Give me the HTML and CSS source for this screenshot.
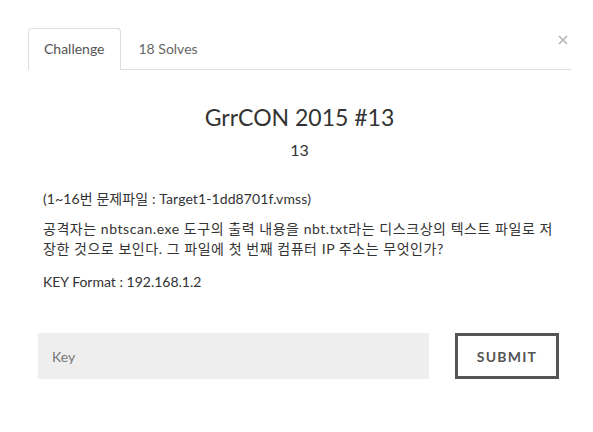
FILE: index.html
```html
<!DOCTYPE html>
<html lang="ko">
<head>
<meta charset="utf-8">
<title>GrrCON 2015 #13</title>
<link rel="stylesheet" href="styles.css">
</head>
<body>
<div class="modal">
  <button class="close" aria-label="Close">
    <svg width="10" height="10" viewBox="0 0 10 10"><path d="M1 1L9 9M9 1L1 9" stroke="#b4b4b4" stroke-width="1.6" fill="none"/></svg>
  </button>
  <ul class="tabs">
    <li class="tab active">Challenge</li>
    <li class="tab">18 Solves</li>
  </ul>
  <div class="content">
    <h3 class="title">GrrCON 2015 #13</h3>
    <div class="points">13</div>
    <div class="desc">
      <p class="file">(1~16번 문제파일 : Target1-1dd8701f.vmss)</p>
      <p class="long">공격자는 nbtscan.exe 도구의 출력 내용을 nbt.txt라는 디스크상의 텍스트 파일로 저장한 것으로 보인다. 그 파일에 첫 번째 컴퓨터 IP 주소는 무엇인가?</p>
      <p class="format">KEY Format : 192.168.1.2</p>
    </div>
  </div>
  <form class="form">
    <input class="key" type="text" placeholder="Key">
    <button class="submit" type="button">SUBMIT</button>
  </form>
</div>
</body>
</html>
```

FILE: styles.css
```css
html, body {
  margin: 0;
  padding: 0;
  background: #fff;
}
body {
  font-family: Lato, "Noto Sans CJK KR", sans-serif;
  color: #333;
  font-size: 14px;
}
.modal {
  position: relative;
  padding: 28px 22px 0 28px;
}
.close {
  position: absolute;
  top: 35px;
  left: 558px;
  width: 10px;
  height: 10px;
  padding: 0;
  border: 0;
  background: none;
  line-height: 0;
}
.tabs {
  list-style: none;
  margin: 0;
  padding: 0;
  display: flex;
  border-bottom: 1px solid #ddd;
}
.tab {
  padding: 10px 15px;
  line-height: 20px;
  border: 1px solid transparent;
  border-bottom: 0;
  border-radius: 4px 4px 0 0;
  margin-right: 2px;
  margin-bottom: -1px;
  color: #666;
  font-size: 14px;
}
.tab.active {
  border-color: #ddd;
  background: #fff;
  color: #555;
  padding-bottom: 11px;
}
.content {
  padding: 0 15px;
}
.title {
  margin: 34px 0 0;
  text-align: center;
  font-weight: 400;
  font-size: 23px;
  line-height: 26px;
  color: #333;
}
.points {
  margin-top: 9px;
  text-align: center;
  font-size: 16px;
  line-height: 22px;
  color: #333;
}
.desc {
  margin-top: 28px;
  width: 520px;
  color: #333;
}
.desc p {
  margin: 0 0 10px;
  line-height: 20px;
}
.desc .file {
  letter-spacing: 0.1px;
}
.desc .long {
  letter-spacing: 0.55px;
}
.desc .format {
  padding-top: 3px;
}
.form {
  display: flex;
  align-items: stretch;
  margin-top: 41px;
  padding-left: 10px;
}
.key {
  width: 391px;
  height: 46px;
  box-sizing: border-box;
  border: 0;
  background: #eee;
  padding: 0 14px;
  font-family: Lato, sans-serif;
  font-size: 14px;
  color: #555;
  outline: none;
}
.key::placeholder {
  color: #777;
}
.submit {
  margin-left: 26px;
  width: 104px;
  height: 46px;
  box-sizing: border-box;
  border: 3px solid #555;
  background: #fff;
  color: #555;
  font-family: Lato, sans-serif;
  font-weight: 700;
  font-size: 14px;
  letter-spacing: 1.2px;
  padding: 0;
}
```
